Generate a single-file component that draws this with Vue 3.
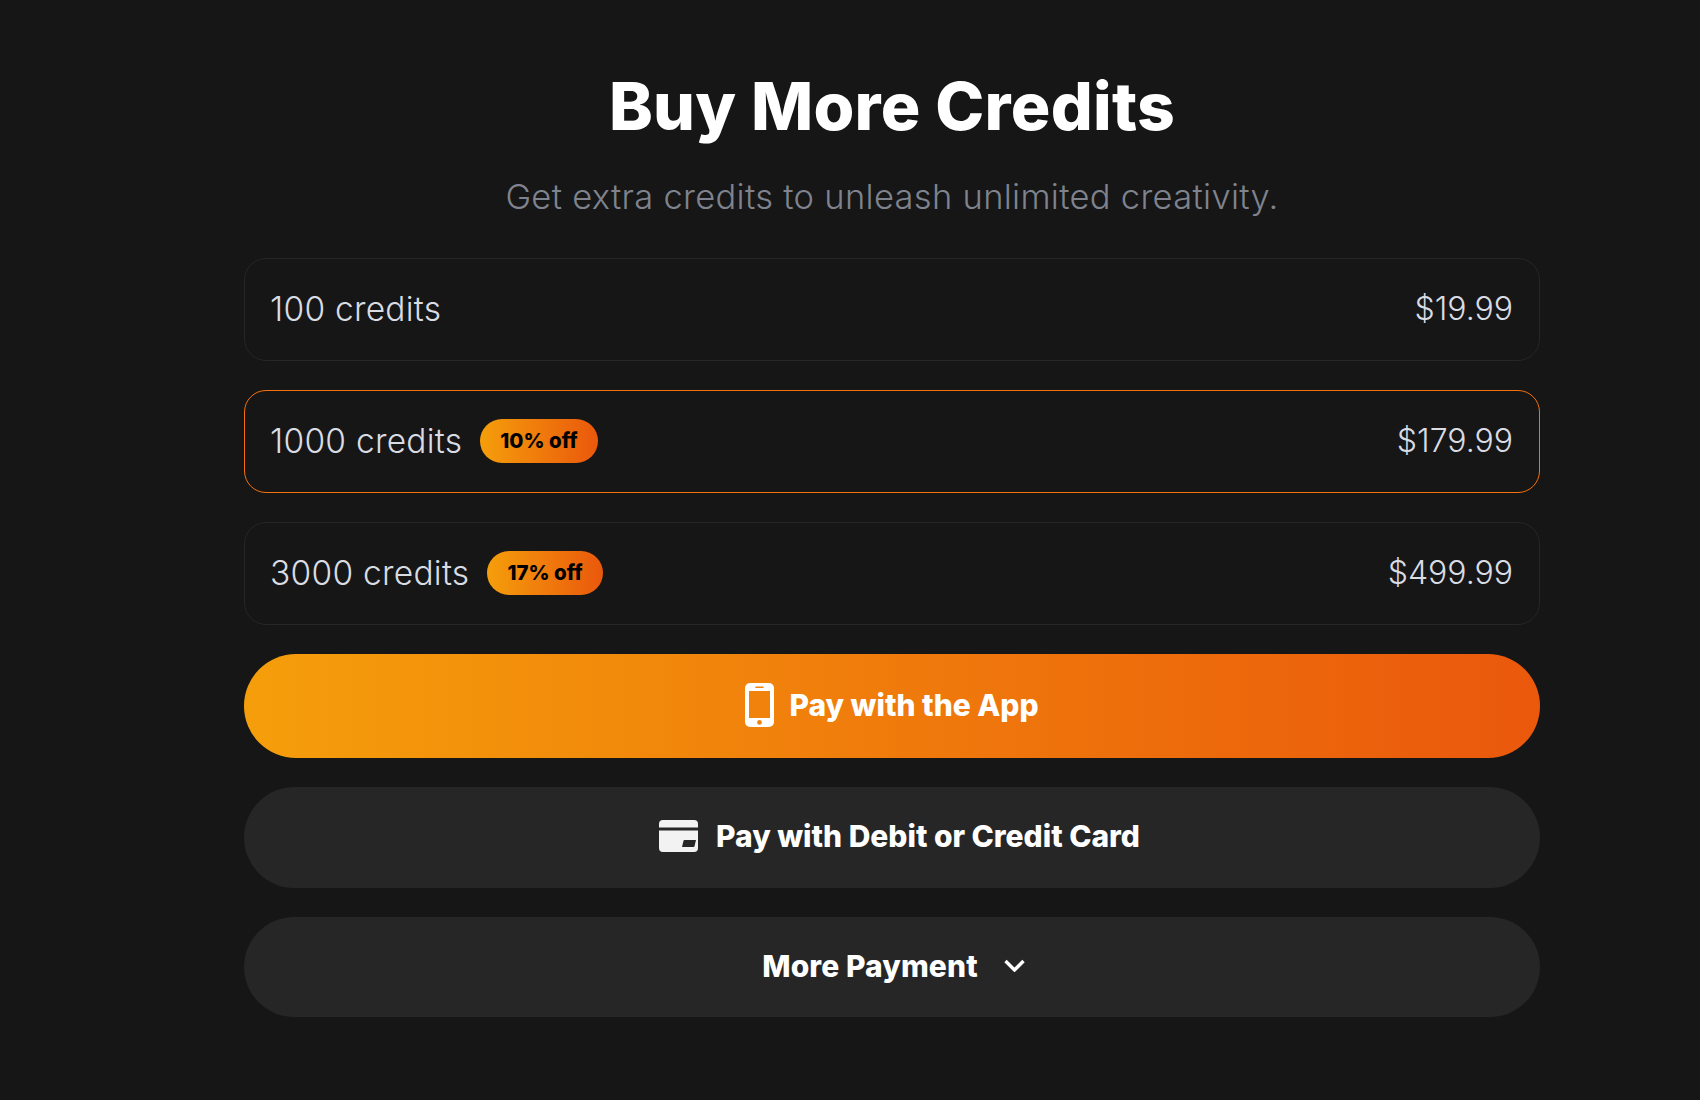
<template>
  <div class="page">
    <main class="panel">
      <h1 class="title">Buy More Credits</h1>
      <p class="subtitle">Get extra credits to unleash unlimited creativity.</p>

      <div class="plans">
        <div
          v-for="plan in plans"
          :key="plan.credits"
          class="plan"
          :class="{ selected: plan.credits === selected }"
        >
          <div class="plan-left">
            <span class="plan-name">{{ plan.credits }} credits</span>
            <span v-if="plan.off" class="badge">{{ plan.off }}</span>
          </div>
          <span class="plan-price">{{ plan.price }}</span>
        </div>
      </div>

      <button class="pay-btn primary">
        <svg class="icon-phone" viewBox="0 0 29 44" fill="none">
          <path
            fill-rule="evenodd"
            fill="#fff"
            d="M5 0h19a5 5 0 0 1 5 5v34a5 5 0 0 1-5 5H5a5 5 0 0 1-5-5V5a5 5 0 0 1 5-5zM4 8v27h21V8zM11 3.4a.8.8 0 0 0 0 1.6h7a.8.8 0 0 0 0-1.6zM14.500 37a2.400 2.400 0 1 0 0 4.800 2.400 2.400 0 0 0 0-4.800z"
          />
        </svg>
        Pay with the App
      </button>

      <button class="pay-btn card">
        <svg class="icon-card" viewBox="0 0 39 32" fill="none">
          <path d="M0 4a4 4 0 0 1 4-4h31a4 4 0 0 1 4 4v3.500H0z" fill="#f2f2f2" />
          <path
            fill="#f2f2f2"
            fill-rule="evenodd"
            d="M0 10.500h39V28a4 4 0 0 1-4 4H4a4 4 0 0 1-4-4zM25.500 20a1 1 0 0 0-1 .7L23 27h11.500a1 1 0 0 0 1-.7l1.500-6.300z"
          />
        </svg>
        Pay with Debit or Credit Card
      </button>

      <button class="pay-btn more">
        More Payment
        <svg class="icon-chevron" viewBox="0 0 21 13" fill="none">
          <path d="M1.500 2l9 9 9-9" stroke="#fff" stroke-width="3.400" />
        </svg>
      </button>
    </main>
  </div>
</template>

<script setup>
import { ref } from "vue";

const selected = ref(1000);

const plans = [
  { credits: 100, price: "$19.99" },
  { credits: 1000, price: "$179.99", off: "10% off" },
  { credits: 3000, price: "$499.99", off: "17% off" },
];
</script>

<style>
body {
  background: #161616;
}
</style>

<style scoped>
.page {
  min-height: 1100px;
  background: #161616;
  padding: 0 160px 0 244px;
  box-sizing: border-box;
  font-family: Inter, "Liberation Sans", sans-serif;
}

.panel {
  display: flex;
  flex-direction: column;
  padding-top: 62px;
}

.title {
  margin: 0;
  text-align: center;
  color: #fff;
  font-size: 66px;
  line-height: 88px;
  font-weight: 800;
  letter-spacing: 0.25px;
}

.subtitle {
  margin: 25px 0 0;
  text-align: center;
  color: #7f838e;
  font-size: 34.500px;
  line-height: 44px;
  font-weight: 300;
  letter-spacing: 0.3px;
}

.plans {
  display: flex;
  flex-direction: column;
  gap: 29px;
  margin-top: 39px;
}

.plan {
  display: flex;
  align-items: center;
  justify-content: space-between;
  height: 103px;
  box-sizing: border-box;
  padding: 0 26px 2px 25px;
  border: 1px solid #262626;
  border-radius: 22px;
}

.plan.selected {
  border-color: #f4700c;
}

.plan-left {
  display: flex;
  align-items: center;
  gap: 18px;
}

.plan-name,
.plan-price {
  color: #d9dce3;
  font-size: 32px;
  font-weight: 300;
}

.plan-name {
  font-size: 33.500px;
  letter-spacing: 0.25px;
}

.badge {
  display: flex;
  align-items: center;
  height: 44px;
  padding: 0 20px;
  border-radius: 22px;
  background: linear-gradient(90deg, #f59e0b, #ea580c);
  color: #000;
  font-size: 20.500px;
  font-weight: 800;
}

.pay-btn {
  display: flex;
  align-items: center;
  justify-content: center;
  gap: 15px;
  height: 101px;
  margin-top: 29px;
  padding: 0 0 3px;
  border: none;
  border-radius: 52px;
  background: #262626;
  color: #fff;
  font-family: inherit;
  font-size: 30px;
  font-weight: 800;
  letter-spacing: -0.02px;
}

.pay-btn.primary {
  height: 104px;
  background: linear-gradient(90deg, #f59e0b, #ea580c);
}

.pay-btn.card {
  gap: 18px;
  padding-left: 15px;
}

.pay-btn.more {
  height: 100px;
  gap: 26px;
  padding-left: 3px;
  letter-spacing: 0.1px;
}

.icon-phone {
  width: 29px;
  height: 44px;
}

.icon-card {
  width: 39px;
  height: 32px;
}

.icon-chevron {
  width: 21px;
  height: 13px;
}
</style>
